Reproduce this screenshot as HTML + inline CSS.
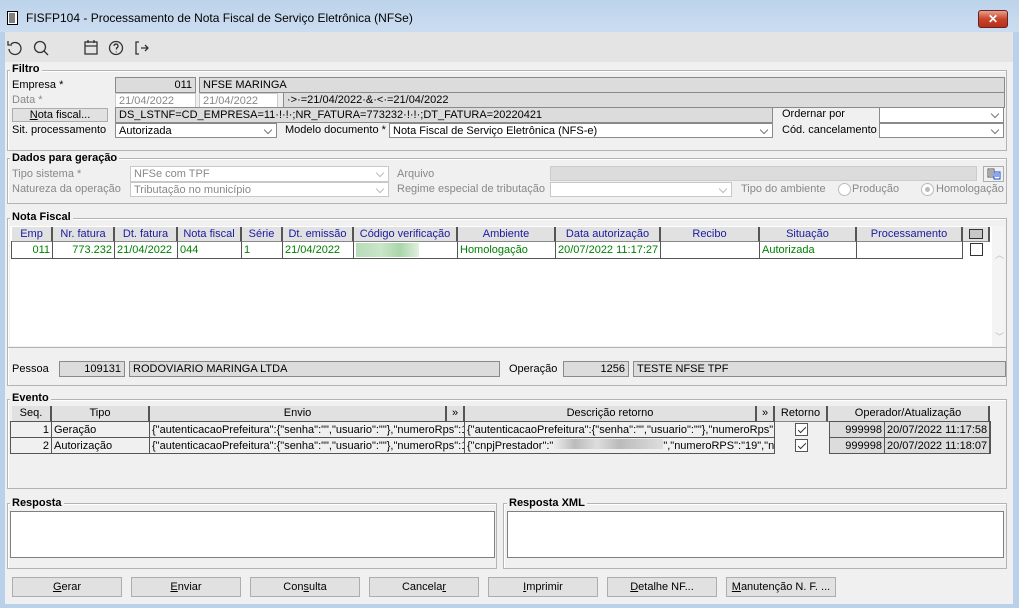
<!DOCTYPE html>
<html><head><meta charset="utf-8"><style>
*{box-sizing:border-box;margin:0;padding:0}
body{width:1019px;height:608px;overflow:hidden;font-family:"Liberation Sans",sans-serif;font-size:11px;color:#000;background:#b9d1ea;position:relative}
.a{position:absolute;white-space:nowrap;overflow:hidden}
.tb{left:0;top:0;width:1019px;height:32px;background:linear-gradient(#bcd3ea,#c6d9ee 60%,#cadcf0)}
.body{left:5px;top:32px;width:1008px;height:572px;background:#f0f0f0}
.tool{left:5px;top:32px;width:1008px;height:30px;background:#e4e4e4}
.gb{position:absolute;border:1px solid #b4b4b4;box-shadow:inset 1px 1px 0 #fff}
.gl{position:absolute;font-weight:bold;background:#f0f0f0;padding:0 2px;font-size:11px;line-height:12px}
.lb{position:absolute;line-height:14px}
.f{position:absolute;border:1px solid #8a8a8a;background:#dcdcdc;line-height:14px;padding:0 3px;white-space:nowrap;overflow:hidden}
.w{background:#fff}
.g{color:#888}
.r{text-align:right}
.sel{position:absolute;border:1px solid #8a8a8a;background:#fff;line-height:14px;padding:0 3px;overflow:hidden;white-space:nowrap}
.sel:after{content:"";position:absolute;right:5px;top:3px;width:5px;height:5px;border-right:1px solid #777;border-bottom:1px solid #777;transform:rotate(45deg)}
.dis{border-color:#c8c8c8;color:#888}
.dis:after{border-color:#bbb}
.btn{position:absolute;border:1px solid #adadad;background:#e1e1e1;text-align:center;line-height:18px}
.th{position:absolute;border-right:2px solid #555;background:#e1e1e1;border-bottom:1px solid #888;color:#1a1aa0;text-align:center;line-height:15px;overflow:hidden;white-space:nowrap}
.tc{position:absolute;border-right:1px solid #555;border-bottom:1px solid #555;line-height:16px;padding:0 2px;overflow:hidden;white-space:nowrap}
.gr{color:#008000}
.ta{position:absolute;border:1px solid #808080;background:#fff}
.cb{position:absolute;width:13px;height:13px;border:1px solid #333;background:#fff}
.chk{position:absolute;width:13px;height:13px;border:1px solid #555;background:#fff}
.chk:after{content:"";position:absolute;left:4px;top:1px;width:3px;height:7px;border-right:1px solid #333;border-bottom:1px solid #333;transform:rotate(45deg)}
.rad{position:absolute;width:13px;height:13px;border-radius:50%;border:1px solid #bbb;background:#fff}
u{text-decoration:underline}
</style></head><body>
<div class="a tb"></div>
<svg class="a" style="left:6px;top:10px" width="14" height="16" viewBox="0 0 14 16"><rect x="1.5" y="1.5" width="10" height="13" fill="#fff" stroke="#000"/><path d="M3 4h6M3 6h6M3 8h6M3 10h6M3 12h6" stroke="#000"/></svg>
<div class="a" style="left:26px;top:11px;font-size:12px;line-height:15px">FISFP104 - Processamento de Nota Fiscal de Serviço Eletrônica (NFSe)</div>
<div class="a" style="left:978px;top:10px;width:30px;height:18px;border:1px solid #6b2020;border-radius:3px;background:linear-gradient(#e8a08a,#c8442c 50%,#b63018);color:#fff;font-weight:bold;text-align:center;line-height:16px;font-size:12px">✕</div>
<div class="a body"></div>
<div class="a tool"></div>
<svg class="a" style="left:6px;top:38px" width="150" height="20" viewBox="0 0 150 20" fill="none" stroke="#333" stroke-width="1.3">
<path d="M5 6 A6 6 0 1 1 3 11"/><path d="M2 3v4h4"/>
<circle cx="34" cy="9" r="5.5"/><path d="M38 13l4 4"/>
<rect x="79" y="4" width="12" height="12"/><path d="M79 8h12M82 2v3M88 2v3"/>
<circle cx="110" cy="10" r="6.5"/><path d="M108 8a2 2 0 1 1 2.5 2v1.5M110.3 13.5v.8"/>
<path d="M133 4h-3v12h3M135 10h7M139 7l3 3-3 3"/>
</svg>

<!-- Filtro -->
<div class="gb" style="left:7px;top:70px;width:1000px;height:81px"></div>
<div class="gl" style="left:10px;top:63px">Filtro</div>
<div class="lb" style="left:12px;top:78px">Empresa *</div>
<div class="f r" style="left:115px;top:77px;width:81px;height:16px">011</div>
<div class="f" style="left:199px;top:77px;width:806px;height:16px">NFSE MARINGA</div>
<div class="lb g" style="left:12px;top:93px">Data *</div>
<div class="f w g" style="left:115px;top:93px;width:81px;height:15px;border-color:#ccc">21/04/2022</div>
<div class="f w g" style="left:199px;top:93px;width:79px;height:15px;border-color:#ccc">21/04/2022</div>
<div class="f" style="left:283px;top:92px;width:722px;height:16px">·&gt;·=21/04/2022·&amp;·&lt;·=21/04/2022</div>
<div class="btn" style="left:12px;top:108px;width:96px;height:14px;line-height:12px"><u>N</u>ota fiscal...</div>
<div class="f" style="left:115px;top:107px;width:658px;height:16px">DS_LSTNF=CD_EMPRESA=11·!·!·;NR_FATURA=773232·!·!·;DT_FATURA=20220421</div>
<div class="lb" style="left:782px;top:107px">Ordernar por</div>
<div class="sel" style="left:879px;top:107px;width:125px;height:16px"></div>
<div class="lb" style="left:12px;top:123px">Sit. processamento</div>
<div class="sel" style="left:115px;top:123px;width:162px;height:15px">Autorizada</div>
<div class="lb" style="left:285px;top:123px">Modelo documento *</div>
<div class="sel" style="left:389px;top:123px;width:384px;height:15px">Nota Fiscal de Serviço Eletrônica (NFS-e)</div>
<div class="lb" style="left:782px;top:123px">Cód. cancelamento</div>
<div class="sel" style="left:879px;top:123px;width:125px;height:15px"></div>

<!-- Dados para geração -->
<div class="gb" style="left:7px;top:158px;width:1000px;height:46px"></div>
<div class="gl" style="left:10px;top:152px">Dados para geração</div>
<div class="lb g" style="left:12px;top:167px">Tipo sistema *</div>
<div class="sel dis" style="left:130px;top:166px;width:259px;height:16px">NFSe com TPF</div>
<div class="lb g" style="left:397px;top:167px">Arquivo</div>
<div class="f" style="left:550px;top:166px;width:427px;height:15px;border-color:#ccc"></div>
<div class="btn" style="left:983px;top:166px;width:21px;height:16px;background:#f0f0f0"></div>
<svg class="a" style="left:987px;top:168px" width="14" height="12"><path d="M1 1h6v8H1zM2 3h4M2 5h4M2 7h4" stroke="#555" fill="#fff"/><rect x="7" y="4" width="6" height="7" fill="#fff" stroke="#1a4ad0"/><path d="M8 6h4M8 8h4" stroke="#1a4ad0"/></svg>
<div class="lb g" style="left:12px;top:182px">Natureza da operação</div>
<div class="sel dis" style="left:130px;top:182px;width:259px;height:15px">Tributação no município</div>
<div class="lb g" style="left:397px;top:182px">Regime especial de tributação</div>
<div class="sel dis" style="left:550px;top:182px;width:182px;height:15px"></div>
<div class="lb g" style="left:741px;top:182px">Tipo do ambiente</div>
<div class="rad" style="left:838px;top:183px"></div>
<div class="lb g" style="left:852px;top:182px">Produção</div>
<div class="rad" style="left:921px;top:183px"><div style="position:absolute;left:3px;top:3px;width:5px;height:5px;border-radius:50%;background:#bbb"></div></div>
<div class="lb g" style="left:936px;top:182px">Homologação</div>

<!-- Nota Fiscal -->
<div class="gb" style="left:7px;top:218px;width:1000px;height:168px"></div>
<div class="gl" style="left:10px;top:211px">Nota Fiscal</div>
<div class="a" style="left:10px;top:226px;width:982px;height:120px;background:#fff"></div>
<div class="a" style="left:992px;top:226px;width:13px;height:120px;background:#f4f4f4"></div>
<div class="a" style="left:995px;top:248px;color:#bbb;font-size:9px">︿</div>
<div class="a" style="left:995px;top:330px;color:#bbb;font-size:9px">﹀</div>
<div class="th" style="left:12px;top:227px;width:41px;height:15px">Emp</div>
<div class="th" style="left:53px;top:227px;width:62px;height:15px">Nr. fatura</div>
<div class="th" style="left:115px;top:227px;width:63px;height:15px">Dt. fatura</div>
<div class="th" style="left:178px;top:227px;width:64px;height:15px">Nota fiscal</div>
<div class="th" style="left:242px;top:227px;width:41px;height:15px">Série</div>
<div class="th" style="left:283px;top:227px;width:71px;height:15px">Dt. emissão</div>
<div class="th" style="left:354px;top:227px;width:104px;height:15px">Código verificação</div>
<div class="th" style="left:458px;top:227px;width:98px;height:15px">Ambiente</div>
<div class="th" style="left:556px;top:227px;width:105px;height:15px">Data autorização</div>
<div class="th" style="left:661px;top:227px;width:99px;height:15px">Recibo</div>
<div class="th" style="left:760px;top:227px;width:97px;height:15px">Situação</div>
<div class="th" style="left:857px;top:227px;width:106px;height:15px">Processamento</div>
<div class="th" style="left:963px;top:227px;width:27px;height:15px"><div style="position:absolute;left:6px;top:2px;width:14px;height:10px;border:1px solid #333;background:#c8c8c8"></div></div>
<div class="a" style="left:11px;top:241px;width:952px;height:18px;border-left:1px solid #555"></div>
<div class="tc gr r" style="left:12px;top:242px;width:41px;height:17px">011</div>
<div class="tc gr r" style="left:53px;top:242px;width:62px;height:17px">773.232</div>
<div class="tc gr" style="left:115px;top:242px;width:63px;height:17px">21/04/2022</div>
<div class="tc gr" style="left:178px;top:242px;width:64px;height:17px">044</div>
<div class="tc gr" style="left:242px;top:242px;width:41px;height:17px">1</div>
<div class="tc gr" style="left:283px;top:242px;width:71px;height:17px">21/04/2022</div>
<div class="tc" style="left:354px;top:242px;width:104px;height:17px"><div style="position:absolute;left:2px;top:1px;width:63px;height:14px;background:linear-gradient(90deg,#b7dcb7,#c9e6c9 40%,#a9d6a9 70%,#dff0df)"></div></div>
<div class="tc gr" style="left:458px;top:242px;width:98px;height:17px">Homologação</div>
<div class="tc gr" style="left:556px;top:242px;width:105px;height:17px">20/07/2022 11:17:27</div>
<div class="tc" style="left:661px;top:242px;width:99px;height:17px"></div>
<div class="tc gr" style="left:760px;top:242px;width:97px;height:17px">Autorizada</div>
<div class="tc" style="left:857px;top:242px;width:106px;height:17px"></div>
<div class="cb" style="left:970px;top:243px"></div>
<div class="a" style="left:7px;top:347px;width:1000px;height:1px;background:#b4b4b4"></div>
<div class="lb" style="left:12px;top:362px">Pessoa</div>
<div class="f r" style="left:59px;top:361px;width:66px;height:16px">109131</div>
<div class="f" style="left:129px;top:361px;width:371px;height:16px">RODOVIARIO MARINGA LTDA</div>
<div class="lb" style="left:509px;top:362px">Operação</div>
<div class="f r" style="left:563px;top:361px;width:66px;height:16px">1256</div>
<div class="f" style="left:633px;top:361px;width:373px;height:16px">TESTE NFSE TPF</div>

<!-- Evento -->
<div class="gb" style="left:7px;top:399px;width:1000px;height:90px"></div>
<div class="gl" style="left:10px;top:392px">Evento</div>
<div class="th" style="left:12px;top:406px;width:40px;height:16px;color:#000">Seq.</div>
<div class="th" style="left:52px;top:406px;width:98px;height:16px;color:#000">Tipo</div>
<div class="th" style="left:150px;top:406px;width:297px;height:16px;color:#000">Envio</div>
<div class="th" style="left:447px;top:406px;width:18px;height:16px;color:#000">»</div>
<div class="th" style="left:465px;top:406px;width:292px;height:16px;color:#000">Descrição retorno</div>
<div class="th" style="left:757px;top:406px;width:18px;height:16px;color:#000">»</div>
<div class="th" style="left:775px;top:406px;width:53px;height:16px;color:#000">Retorno</div>
<div class="th" style="left:828px;top:406px;width:162px;height:16px;color:#000">Operador/Atualização</div>
<div class="a" style="left:10px;top:421px;width:765px;height:33px;border:1px solid #555;border-right:none"></div>
<div class="tc r" style="left:11px;top:422px;width:41px;height:16px">1</div>
<div class="tc" style="left:52px;top:422px;width:98px;height:16px">Geração</div>
<div class="tc" style="left:150px;top:422px;width:315px;height:16px">{"autenticacaoPrefeitura":{"senha":"","usuario":""},"numeroRps":1</div>
<div class="tc" style="left:465px;top:422px;width:310px;height:16px">{"autenticacaoPrefeitura":{"senha":"","usuario":""},"numeroRps"</div>
<div class="tc r" style="left:11px;top:438px;width:41px;height:16px">2</div>
<div class="tc" style="left:52px;top:438px;width:98px;height:16px">Autorização</div>
<div class="tc" style="left:150px;top:438px;width:315px;height:16px">{"autenticacaoPrefeitura":{"senha":"","usuario":""},"numeroRps":1</div>
<div class="tc" style="left:465px;top:438px;width:310px;height:16px">{"cnpjPrestador":"<span style="display:inline-block;width:110px;height:10px;background:linear-gradient(90deg,#eee,#bbb 20%,#ddd 40%,#bbb 60%,#ddd)"></span>","numeroRPS":"19","numero</div>
<div class="chk" style="left:795px;top:423px"></div>
<div class="chk" style="left:795px;top:439px"></div>
<div class="a" style="left:829px;top:421px;width:162px;height:33px;border:1px solid #555"></div>
<div class="tc r" style="left:830px;top:422px;width:55px;height:16px;background:#dcdcdc">999998</div>
<div class="tc" style="left:885px;top:422px;width:105px;height:16px;background:#dcdcdc">20/07/2022 11:17:58</div>
<div class="tc r" style="left:830px;top:438px;width:55px;height:16px;background:#dcdcdc">999998</div>
<div class="tc" style="left:885px;top:438px;width:105px;height:16px;background:#dcdcdc">20/07/2022 11:18:07</div>

<!-- Resposta -->
<div class="gb" style="left:7px;top:503px;width:490px;height:66px"></div>
<div class="gl" style="left:10px;top:497px">Resposta</div>
<div class="ta" style="left:10px;top:511px;width:485px;height:47px"></div>
<div class="gb" style="left:503px;top:503px;width:504px;height:66px"></div>
<div class="gl" style="left:507px;top:497px">Resposta XML</div>
<div class="ta" style="left:507px;top:511px;width:497px;height:47px"></div>

<div class="btn" style="left:12px;top:577px;width:110px;height:20px"><u>G</u>erar</div>
<div class="btn" style="left:131px;top:577px;width:110px;height:20px"><u>E</u>nviar</div>
<div class="btn" style="left:250px;top:577px;width:110px;height:20px">Con<u>s</u>ulta</div>
<div class="btn" style="left:369px;top:577px;width:110px;height:20px">Cancela<u>r</u></div>
<div class="btn" style="left:488px;top:577px;width:110px;height:20px"><u>I</u>mprimir</div>
<div class="btn" style="left:607px;top:577px;width:110px;height:20px"><u>D</u>etalhe NF...</div>
<div class="btn" style="left:726px;top:577px;width:110px;height:20px"><u>M</u>anutenção N. F. ...</div>
</body></html>
